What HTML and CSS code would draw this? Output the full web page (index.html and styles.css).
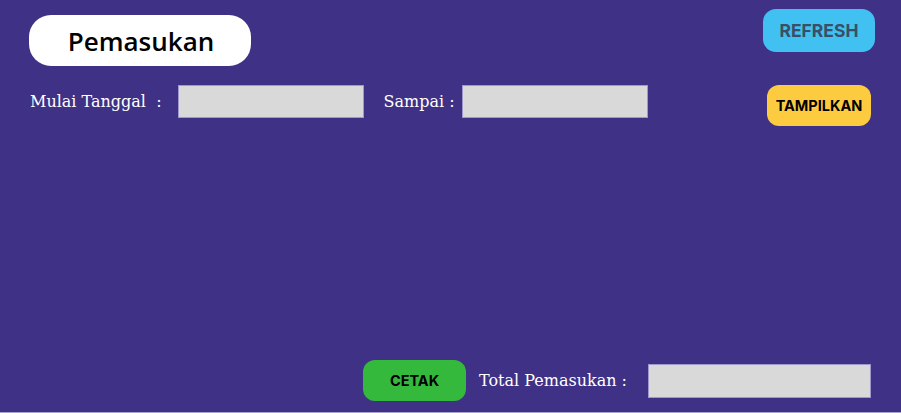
FILE: index.html
```html
<!DOCTYPE html>
<html>
<head>
<meta charset="utf-8">
<link rel="stylesheet" href="styles.css">
</head>
<body>
<div class="page">
  <div class="header">
    <div class="title">Pemasukan</div>
    <button class="btn btn-refresh">REFRESH</button>
  </div>
  <div class="filter">
    <span class="label label-start">Mulai Tanggal&nbsp; :</span>
    <div class="field field-date"></div>
    <span class="label label-end">Sampai :</span>
    <div class="field field-date"></div>
    <button class="btn btn-show">TAMPILKAN</button>
  </div>
  <div class="spacer"></div>
  <div class="footer">
    <button class="btn btn-print">CETAK</button>
    <span class="label label-total">Total Pemasukan :</span>
    <div class="field field-total"></div>
  </div>
</div>
</body>
</html>
```
FILE: styles.css
```css
html, body {
  margin: 0;
  padding: 0;
}
body {
  width: 901px;
  height: 413px;
  background: #3f3185;
  overflow: hidden;
}
.page {
  height: 412px;
  border-bottom: 1px solid #a9a3d2;
  display: flex;
  flex-direction: column;
}
.header {
  display: flex;
  justify-content: space-between;
  align-items: flex-start;
  padding: 9px 26px 0 29px;
}
.title {
  margin-top: 6px;
  width: 222px;
  height: 51px;
  background: #ffffff;
  border-radius: 22px;
  display: flex;
  align-items: center;
  justify-content: center;
  font-family: "Open Sans", sans-serif;
  font-size: 26px;
  font-weight: 600;
  color: #000;
  padding-left: 2px;
  box-sizing: border-box;
}
.btn {
  border: none;
  font-family: Inter, "Liberation Sans", sans-serif;
  font-weight: 700;
  display: flex;
  align-items: center;
  justify-content: center;
  padding: 0;
}
.btn-refresh {
  width: 112px;
  height: 43px;
  border-radius: 13px;
  background: #41c1f2;
  color: #3a4f66;
  font-size: 17.5px;
}
.filter {
  display: flex;
  align-items: flex-start;
  margin-top: 19px;
  padding-left: 30px;
  padding-right: 30px;
  height: 41px;
}
.label {
  font-family: "DejaVu Serif", serif;
  font-size: 16px;
  color: #ffffff;
  white-space: pre;
  line-height: 33px;
}
.field {
  background: #d9d9d9;
  border: 1px solid #9f98cc;
  box-sizing: border-box;
}
.field-date {
  width: 186px;
  height: 33px;
}
.label-start {
  margin-right: 16px;
}
.label-end {
  margin-left: 20px;
  margin-right: 7px;
}
.btn-show {
  margin-left: auto;
  width: 104px;
  height: 41px;
  border-radius: 12px;
  background: #fdcb40;
  color: #000;
  font-size: 14.5px;
}
.spacer {
  flex: 1;
}
.footer {
  display: flex;
  align-items: center;
  padding-left: 363px;
  margin-bottom: 11px;
  height: 41px;
}
.btn-print {
  width: 103px;
  height: 41px;
  border-radius: 12px;
  background: #34b93d;
  color: #000;
  font-size: 14.5px;
}
.label-total {
  margin-left: 13px;
  margin-right: 21px;
  line-height: 34px;
}
.field-total {
  width: 223px;
  height: 34px;
}
```
